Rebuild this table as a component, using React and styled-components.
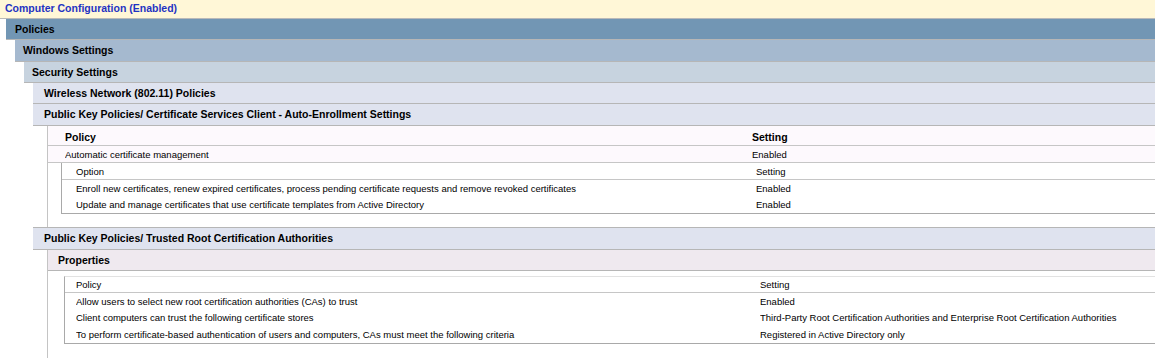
import React from 'react';
import styled, { createGlobalStyle } from 'styled-components';

const GlobalStyle = createGlobalStyle`
  html, body {
    margin: 0;
    padding: 0;
    background: #ffffff;
  }
  body {
    font-family: "Liberation Sans", Arial, sans-serif;
    font-size: 9.5px;
    color: #000;
  }
`;

const Page = styled.div`
  width: 100%;
  overflow: hidden;
`;

const Title = styled.div`
  height: 18px;
  line-height: 17px;
  padding-left: 5px;
  background: #fff7d7;
  border-bottom: 1px solid #b9b9b9;
  color: #1f33c3;
  font-size: 10.5px;
  font-weight: bold;
  white-space: nowrap;
`;

const Level = styled.div`
  margin-left: ${p => p.$indent}px;
`;

const Bar = styled.div`
  height: ${p => p.$h || 20}px;
  line-height: ${p => p.$h || 20}px;
  padding-left: ${p => p.$pad}px;
  background: ${p => p.$bg};
  border-top: ${p => (p.$topLine ? '1px solid #b6b6b6' : 'none')};
  border-bottom: 1px solid #b6b6b6;
  font-size: 10.5px;
  font-weight: bold;
  white-space: nowrap;
`;

const Body = styled.div`
  margin-left: 14px;
  border-left: 1px solid #c4c4c4;
  padding-bottom: ${p => p.$bottom}px;
`;

const Table = styled.div`
  background: ${p => p.$bg || 'transparent'};
  margin-left: ${p => p.$indent || 0}px;
  margin-top: ${p => p.$top || 0}px;
  border-left: ${p => (p.$boxed ? '1px solid #a9a9a9' : 'none')};
  border-bottom: ${p => (p.$boxed ? '1px solid #a9a9a9' : 'none')};
  border-top: ${p => (p.$topLine ? '1px solid #e2e2e2' : 'none')};
`;

const Row = styled.div`
  display: grid;
  grid-template-columns: ${p => p.$col}px 1fr;
  align-items: center;
  padding-left: ${p => p.$pad}px;
  padding-top: ${p => p.$drop || 0}px;
  height: ${p => p.$h || 16}px;
  box-sizing: border-box;
  border-bottom: ${p => (p.$line ? '1px solid #c6c6c6' : 'none')};
  font-size: ${p => (p.$bold ? '10.5px' : 'inherit')};
  font-weight: ${p => (p.$bold ? 'bold' : 'normal')};
  white-space: nowrap;
`;

const Cell = styled.span`
  overflow: hidden;
`;

const autoEnroll = [
  ['Enroll new certificates, renew expired certificates, process pending certificate requests and remove revoked certificates', 'Enabled'],
  ['Update and manage certificates that use certificate templates from Active Directory', 'Enabled'],
];

const trustedRoot = [
  ['Allow users to select new root certification authorities (CAs) to trust', 'Enabled'],
  ['Client computers can trust the following certificate stores', 'Third-Party Root Certification Authorities and Enterprise Root Certification Authorities'],
  ['To perform certificate-based authentication of users and computers, CAs must meet the following criteria', 'Registered in Active Directory only'],
];

export default function App() {
  return (
    <Page>
      <GlobalStyle />
      <Title>Computer Configuration (Enabled)</Title>
      <Level $indent={6}>
        <Bar $bg="#7296b4" $pad={9}>Policies</Bar>
        <Level $indent={9}>
          <Bar $bg="#a5b9cf" $pad={8} $h={21}>Windows Settings</Bar>
          <Level $indent={9}>
            <Bar $bg="#c7d3df" $pad={8}>Security Settings</Bar>
            <Level $indent={9}>
              <Bar $bg="#dfe3ef" $pad={11}>Wireless Network (802.11) Policies</Bar>

              <Bar $bg="#dfe3ef" $pad={11} $h={21}>Public Key Policies/ Certificate Services Client - Auto-Enrollment Settings</Bar>
              <Body $bottom={13}>
                <Table $bg="#fdf9fd">
                  <Row $col={687} $pad={17} $h={20} $drop={3} $line $bold>
                    <Cell>Policy</Cell>
                    <Cell>Setting</Cell>
                  </Row>
                  <Row $col={687} $pad={17} $h={17} $line>
                    <Cell>Automatic certificate management</Cell>
                    <Cell>Enabled</Cell>
                  </Row>
                </Table>
                <Table $indent={13} $boxed>
                  <Row $col={680} $pad={14} $h={17} $line>
                    <Cell>Option</Cell>
                    <Cell>Setting</Cell>
                  </Row>
                  {autoEnroll.map(([name, value]) => (
                    <Row key={name} $col={680} $pad={14} $h={16.5}>
                      <Cell>{name}</Cell>
                      <Cell>{value}</Cell>
                    </Row>
                  ))}
                </Table>
              </Body>

              <Bar $bg="#dfe3ef" $pad={11} $h={21} $topLine>Public Key Policies/ Trusted Root Certification Authorities</Bar>
              <Body $bottom={20}>
                <Bar $bg="#efe9ef" $pad={10}>Properties</Bar>
                <Table $indent={16} $top={5} $boxed $topLine>
                  <Row $col={684} $pad={11} $h={16} $line>
                    <Cell>Policy</Cell>
                    <Cell>Setting</Cell>
                  </Row>
                  {trustedRoot.map(([name, value]) => (
                    <Row key={name} $col={684} $pad={11} $h={16.5}>
                      <Cell>{name}</Cell>
                      <Cell>{value}</Cell>
                    </Row>
                  ))}
                </Table>
              </Body>
            </Level>
          </Level>
        </Level>
      </Level>
    </Page>
  );
}
